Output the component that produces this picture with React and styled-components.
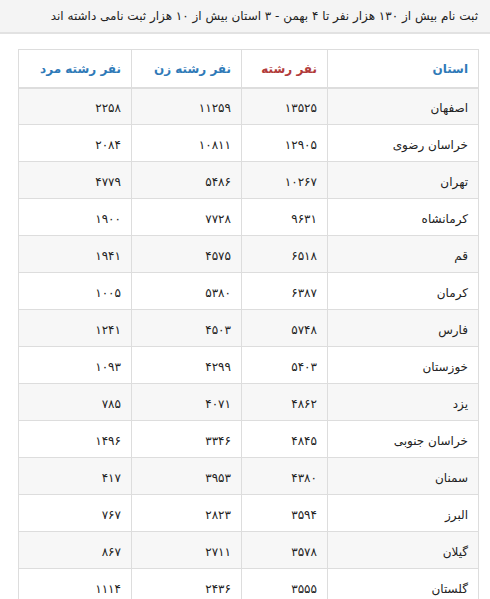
import React from "react";
import styled, { createGlobalStyle } from "styled-components";

const GlobalStyle = createGlobalStyle`
  body {
    margin: 0;
    background: #fff;
    font-family: "DejaVu Sans", "Noto Sans", sans-serif;
  }
`;

const Page = styled.div`
  direction: rtl;
  width: 490px;
`;

const TitleBar = styled.div`
  height: 34px;
  box-sizing: border-box;
  background: #f4f4f4;
  border-bottom: 2px solid #e2e2e2;
  padding: 0 12px 1px;
  display: flex;
  align-items: center;
  font-size: 12px;
  color: #222;
`;

const Table = styled.table`
  border-collapse: collapse;
  margin: 15px 11px 0 0;
  width: 460px;
  table-layout: fixed;
  font-size: 12px;
`;

const Th = styled.th`
  box-sizing: border-box;
  width: ${(p) => p.w}px;
  height: 38px;
  border: 1px solid #ddd;
  border-bottom: 2px solid #ddd;
  text-align: right;
  padding: 2px 10px 0;
  font-weight: bold;
  color: ${(p) => (p.red ? "#b23b3b" : "#2f7ab8")};
`;

const Tr = styled.tr`
  background: ${(p) => (p.odd ? "#f7f7f7" : "#fff")};
`;

const Td = styled.td`
  box-sizing: border-box;
  height: 37px;
  border: 1px solid #ddd;
  text-align: right;
  padding: 3px 10px 0;
  color: #222;
`;

const rows = [
  ["اصفهان", "۱۳۵۲۵", "۱۱۲۵۹", "۲۲۵۸"],
  ["خراسان رضوی", "۱۲۹۰۵", "۱۰۸۱۱", "۲۰۸۴"],
  ["تهران", "۱۰۲۶۷", "۵۴۸۶", "۴۷۷۹"],
  ["کرمانشاه", "۹۶۳۱", "۷۷۲۸", "۱۹۰۰"],
  ["قم", "۶۵۱۸", "۴۵۷۵", "۱۹۴۱"],
  ["کرمان", "۶۳۸۷", "۵۳۸۰", "۱۰۰۵"],
  ["فارس", "۵۷۴۸", "۴۵۰۳", "۱۲۴۱"],
  ["خوزستان", "۵۴۰۳", "۴۲۹۹", "۱۰۹۳"],
  ["یزد", "۴۸۶۲", "۴۰۷۱", "۷۸۵"],
  ["خراسان جنوبی", "۴۸۴۵", "۳۳۴۶", "۱۴۹۶"],
  ["سمنان", "۴۳۸۰", "۳۹۵۳", "۴۱۷"],
  ["البرز", "۳۵۹۴", "۲۸۲۳", "۷۶۷"],
  ["گیلان", "۳۵۷۸", "۲۷۱۱", "۸۶۷"],
  ["گلستان", "۳۵۵۵", "۲۴۳۶", "۱۱۱۴"],
];

export default function App() {
  return (
    <Page>
      <GlobalStyle />
      <TitleBar>
        ثبت نام بیش از ۱۳۰ هزار نفر تا ۴ بهمن - ۳ استان بیش از ۱۰ هزار ثبت نامی داشته اند
      </TitleBar>
      <Table>
        <thead>
          <tr>
            <Th w={151}>استان</Th>
            <Th w={86} red>نفر رشته</Th>
            <Th w={110}>نفر رشته زن</Th>
            <Th w={113}>نفر رشته مرد</Th>
          </tr>
        </thead>
        <tbody>
          {rows.map((r, i) => (
            <Tr key={r[0]} odd={i % 2 === 0}>
              {r.map((c, j) => (
                <Td key={j}>{c}</Td>
              ))}
            </Tr>
          ))}
        </tbody>
      </Table>
    </Page>
  );
}
